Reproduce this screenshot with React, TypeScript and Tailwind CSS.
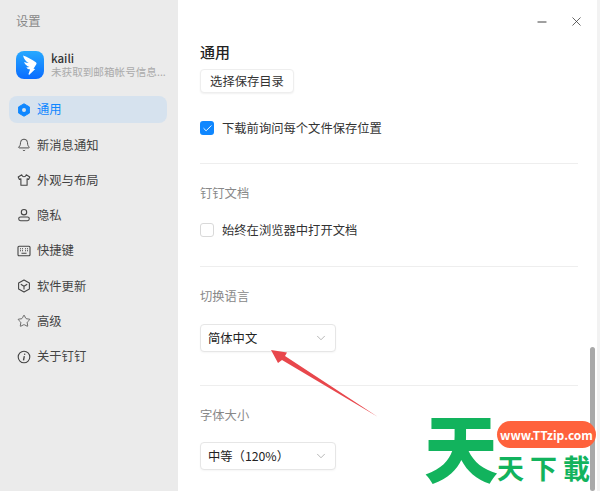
import type { ReactNode } from "react";
import { Bell, Check, ChevronDown, Minus, Star, X } from "lucide-react";

const FONT = "font-['Noto_Sans_CJK_SC','Noto_Sans',sans-serif]";

const Shirt = () => (
  <svg width="14" height="14" viewBox="0 0 14 14" fill="none" stroke="#444" strokeWidth="1.1" strokeLinejoin="round">
    <path d="M4.8 1.8 1.2 4l1.2 2.5 1.5-.7v6.4h6.2V5.8l1.5.7L12.800 4 9.200 1.800c-.4 1.300-1.200 1.900-2.200 1.900s-1.800-.6-2.200-1.900Z" />
  </svg>
);

const Person = () => (
  <svg width="14" height="14" viewBox="0 0 14 14" fill="none" stroke="#444" strokeWidth="1.1">
    <circle cx="7" cy="4.200" r="2.700" />
    <rect x="1.700" y="9" width="10.600" height="3.700" rx="1.850" />
  </svg>
);

const Keys = () => (
  <svg width="14" height="14" viewBox="0 0 14 14" fill="none" stroke="#444" strokeWidth="1.1">
    <rect x="1" y="2.200" width="12" height="9.600" rx="1" />
    <path d="M3 4.700h1M5 4.700h1M8 4.700h1M10 4.700h1M3 6.800h1M5 6.800h1M8 6.800h1M10 6.800h1M4.500 9.200h5" />
  </svg>
);

const Cube = () => (
  <svg width="14" height="14" viewBox="0 0 14 14" fill="none" stroke="#444" strokeWidth="1.1" strokeLinejoin="round">
    <path d="M7 1 12.400 4v6L7 13 1.600 10V4L7 1Z" />
    <path d="M3.800 5.200 7 7.200l3.200-2M7 7.200v3.300" />
  </svg>
);

const InfoItalic = () => (
  <svg width="14" height="14" viewBox="0 0 14 14" fill="none" stroke="#444" strokeWidth="1.1">
    <circle cx="7" cy="7" r="5.800" />
    <path d="M7.300 6.200 6.500 10.300" strokeWidth="1.300" />
    <circle cx="7.700" cy="4.200" r=".7" fill="#444" stroke="none" />
  </svg>
);

const GeneralIcon = () => (
  <svg width="14" height="14" viewBox="0 0 14 14">
    <path d="M7 .8 12.400 3.900v6.200L7 13.200 1.600 10.100V3.900L7 .8Z" fill="#0f87ff" stroke="#0f87ff" strokeLinejoin="round" />
    <circle cx="7" cy="7" r="2" fill="#d6e2ee" />
  </svg>
);

const DingLogo = () => (
  <svg width="28" height="28" viewBox="0 0 28 28" className="shrink-0 rounded-lg">
    <defs>
      <linearGradient id="ding" x1="0" y1="0" x2="0" y2="1">
        <stop offset="0" stopColor="#27a9ff" />
        <stop offset="1" stopColor="#0a6cff" />
      </linearGradient>
    </defs>
    <rect width="28" height="28" fill="url(#ding)" />
    <path d="M7 4.500c4.500 1.700 9 3.800 12.800 6.700.8.700.9 1.300.5 2.100l-2.800 4.500 1.800.2-6.300 6-.5-1 1.600-4.600c-1.600 0-3-.7-3.800-2l3.300-.5c-2.800-.6-4.800-2.300-5.500-4.800 1.600.7 3.200 1 4.600 1C9.800 10.500 8 8 7 4.500Z" fill="#fff" />
  </svg>
);

const NAV: { label: string; icon: ReactNode; active?: boolean }[] = [
  { label: "通用", icon: <GeneralIcon />, active: true },
  { label: "新消息通知", icon: <Bell size={14} strokeWidth={1.6} color="#444" /> },
  { label: "外观与布局", icon: <Shirt /> },
  { label: "隐私", icon: <Person /> },
  { label: "快捷键", icon: <Keys /> },
  { label: "软件更新", icon: <Cube /> },
  { label: "高级", icon: <Star size={14} strokeWidth={1.3} color="#444" /> },
  { label: "关于钉钉", icon: <InfoItalic /> },
];

function Sidebar() {
  return (
    <aside className="w-[178px] shrink-0 bg-[#ebebeb] pt-[12px]">
      <div className="pl-4 text-[12.300px] leading-[18px] text-[#888]">设置</div>
      <div className="mt-[21px] flex items-center gap-[7px] pl-4">
        <DingLogo />
        <div className="min-w-0">
          <div className="text-[11.500px] font-medium leading-[14px] text-[#333]">kaili</div>
          <div className="whitespace-nowrap text-[10.600px] leading-[14px] text-[#aaa]">未获取到邮箱帐号信息...</div>
        </div>
      </div>
      <nav className="mt-[17px] flex flex-col gap-[8.300px] px-[9px] pr-[11px]">
        {NAV.map((item) => (
          <div
            key={item.label}
            className={`flex h-[27px] items-center gap-[6px] rounded-lg pl-[8px] text-[12.300px] ${
              item.active ? "bg-[#d6e2ee] text-[#0f87ff]" : "text-[#444]"
            }`}
          >
            {item.icon}
            <span>{item.label}</span>
          </div>
        ))}
      </nav>
    </aside>
  );
}

function Field({ title, children }: { title: string; children: ReactNode }) {
  return (
    <section className="border-b border-[#eeeeee]">
      <h3 className="text-[12.300px] leading-[18px] text-[#888]">{title}</h3>
      {children}
    </section>
  );
}

function Select({ value }: { value: string }) {
  return (
    <div className="flex h-[28px] w-[136px] items-center justify-between rounded border border-[#e6e6e6] bg-white pl-[7px] pr-[7px] text-[12.300px] text-[#222] shadow-[0_1px_2px_rgba(0,0,0,0.04)]">
      <span>{value}</span>
      <ChevronDown size={14} strokeWidth={1.2} color="#999" />
    </div>
  );
}

function Watermark() {
  return (
    <div className="absolute left-[428px] top-[412px] h-[76px] w-[170px]">
      <span className="absolute left-[-4px] top-[-4px] text-[74px] font-black leading-[74px] text-[#12b35d]">天</span>
      <span className="absolute left-[69px] top-[9px] flex h-[27px] w-[99px] items-center justify-center rounded-full bg-[#ff623c] text-[12px] font-bold text-white">
        www.TTzip.com
      </span>
      <span className="absolute left-[69px] top-[36px] flex gap-[6px] text-[27px] font-bold leading-[40px] text-[#12b35d]">
        <span>天</span>
        <span>下</span>
        <span>載</span>
      </span>
    </div>
  );
}

export default function App() {
  return (
    <div className={`relative flex h-[491px] w-[600px] overflow-hidden bg-white ${FONT}`}>
      <Sidebar />
      <main className="flex-1 pl-[22px] pr-[19px] pt-[42px]">
        <h2 className="text-[15px] font-medium leading-[20px] text-[#222]">通用</h2>
        <section className="border-b border-[#eeeeee] pb-[27px]">
          <button className="mt-[7px] flex h-[24px] w-[94px] items-center justify-center rounded border border-[#eeeeee] bg-white text-[12.300px] text-[#333] shadow-[0_1px_2px_rgba(0,0,0,0.06)]">
            选择保存目录
          </button>
          <label className="mt-[27px] flex h-[16px] items-center gap-[8px] text-[12.300px] text-[#333]">
            <span className="flex size-[14px] items-center justify-center rounded-[3px] bg-[#0f87ff]">
              <Check size={11} strokeWidth={2} color="#fff" />
            </span>
            下载前询问每个文件保存位置
          </label>
        </section>
        <div className="mt-[20px]">
          <Field title="钉钉文档">
            <label className="mt-[20px] mb-[28px] flex h-[16px] items-center gap-[8px] text-[12.300px] text-[#333]">
              <span className="size-[14px] rounded-[3px] border border-[#d9d9d9] bg-white" />
              始终在浏览器中打开文档
            </label>
          </Field>
        </div>
        <div className="mt-[20px]">
          <Field title="切换语言">
            <div className="mt-[19px] mb-[33px]">
              <Select value="简体中文" />
            </div>
          </Field>
        </div>
        <div className="mt-[20px]">
          <h3 className="text-[12.300px] leading-[18px] text-[#888]">字体大小</h3>
          <div className="mt-[18px]">
            <Select value="中等（120%）" />
          </div>
        </div>
      </main>
      <div className="w-[3px] shrink-0 bg-[#f2f2f2]" />
      <div className="absolute right-[16px] top-[14px] flex items-center gap-[20px] text-[#333]">
        <Minus size={14} strokeWidth={1.6} />
        <X size={15} strokeWidth={1.2} />
      </div>
      <div className="absolute left-[590px] top-[347px] h-[144px] w-[5px] rounded-full bg-[#a9a9a9]" />
      <svg className="absolute left-[260px] top-[340px]" width="130" height="85" viewBox="0 0 130 85">
        <path d="M11 10 27 12.500 25 16 118 77 22 20 18 23Z" fill="#e8474c" />
      </svg>
      <Watermark />
    </div>
  );
}
